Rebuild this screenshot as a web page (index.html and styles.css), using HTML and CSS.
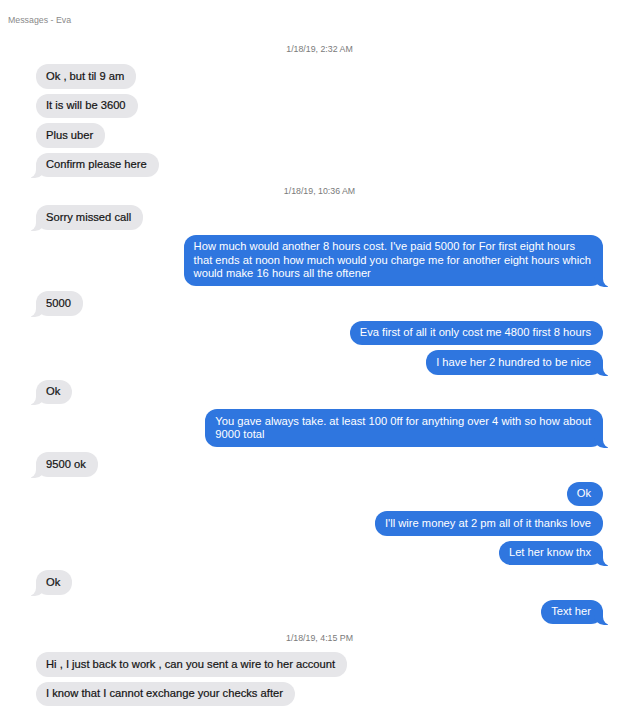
FILE: index.html
```html
<!DOCTYPE html>
<html lang="en">

<head>
    <meta charset="UTF-8">
    <meta name="viewport" content="width=device-width, initial-scale=1.0">
    <title>Messages - Eva</title>
    <link rel="stylesheet" href="styles.css">
</head>

<body>
    <div class="title">Messages - Eva</div>

    <div class="thread">
        <div class="stamp first">1/18/19, 2:32 AM</div>
        <div class="msg in">Ok , but til 9 am</div>
        <div class="msg in">It is will be 3600</div>
        <div class="msg in">Plus uber</div>
        <div class="msg in tail">Confirm please here</div>

        <div class="stamp">1/18/19, 10:36 AM</div>
        <div class="msg in tail">Sorry missed call</div>
        <div class="msg out tail">How much would another 8 hours cost. I've paid 5000 for For first eight hours<br>that ends at noon how much would you charge me for another eight hours which<br>would make 16 hours all the oftener</div>
        <div class="msg in tail">5000</div>
        <div class="msg out">Eva first of all it only cost me 4800 first 8 hours</div>
        <div class="msg out tail">I have her 2 hundred to be nice</div>
        <div class="msg in tail">Ok</div>
        <div class="msg out tail">You gave always take. at least 100 0ff for anything over 4 with so how about<br>9000 total</div>
        <div class="msg in tail">9500 ok</div>
        <div class="msg out">Ok</div>
        <div class="msg out">I'll wire money at 2 pm all of it thanks love</div>
        <div class="msg out tail">Let her know thx</div>
        <div class="msg in tail">Ok</div>
        <div class="msg out tail">Text her</div>

        <div class="stamp">1/18/19, 4:15 PM</div>
        <div class="msg in">Hi , I just back to work , can you sent a wire to her account</div>
        <div class="msg in">I know that I cannot exchange your checks after</div>
    </div>
</body>

</html>
```

FILE: styles.css
```css
/* page */
body {
    margin: 0;
    background: #fff;
    font-family: "Liberation Sans", Arial, sans-serif;
    overflow: hidden;
}

.title {
    font-size: 8.8px;
    color: #8a8a8a;
    padding: 15px 8px 0;
    height: 22px;
}

/* conversation */
.thread {
    display: flex;
    flex-direction: column;
    gap: 5px;
    padding: 0 37px 0 36px;
}

.stamp {
    align-self: center;
    font-size: 8.8px;
    color: #7a7a7a;
    height: 18px;
    line-height: 18px;
}

.stamp.first {
    margin: 3px 0 1px;
}

.msg {
    position: relative;
    font-size: 11.2px;
    line-height: 13.5px;
    padding: 5.5px 12px 5.5px 10px;
    border-radius: 12px;
    white-space: nowrap;
}

.in {
    align-self: flex-start;
    background: #e6e6e9;
    color: #141414;
    -webkit-text-stroke: 0.2px #141414;
}

.out {
    align-self: flex-end;
    background: #2f76df;
    color: #fff;
}

/* bubble tails */
.tail::before,
.tail::after {
    content: "";
    position: absolute;
    bottom: -1px;
    height: 14px;
}

.in.tail::before {
    left: -5px;
    width: 14px;
    background: #e6e6e9;
    border-bottom-right-radius: 10px;
}

.in.tail::after {
    left: -8px;
    width: 8px;
    background: #fff;
    border-bottom-right-radius: 8px;
}

.out.tail::before {
    right: -5px;
    width: 14px;
    background: #2f76df;
    border-bottom-left-radius: 10px;
}

.out.tail::after {
    right: -8px;
    width: 8px;
    background: #fff;
    border-bottom-left-radius: 8px;
}
```
